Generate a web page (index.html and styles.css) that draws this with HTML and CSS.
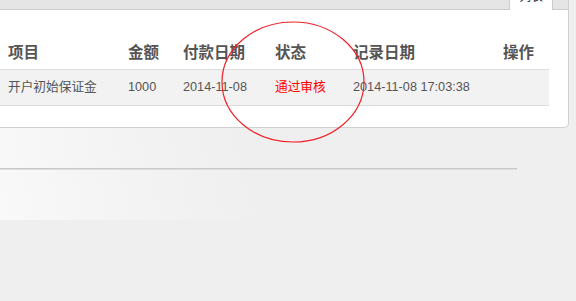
FILE: index.html
```html
<!DOCTYPE html>
<html>
<head lang="zh-CN">
    <meta charset="UTF-8">
    <title>保证金记录</title>
    <link rel="stylesheet" href="styles.css">
</head>
<body>
<div class="panel">
    <div class="tabs">
        <span class="tab">列表</span>
    </div>
    <div class="grid">
        <div class="row head">
            <div>项目</div>
            <div>金额</div>
            <div>付款日期</div>
            <div>状态</div>
            <div>记录日期</div>
            <div>操作</div>
        </div>
        <div class="row item">
            <div>开户初始保证金</div>
            <div>1000</div>
            <div>2014-11-08</div>
            <div class="ok">通过审核</div>
            <div>2014-11-08 17:03:38</div>
            <div></div>
        </div>
    </div>
</div>
<div class="foot">
    <div class="rule"></div>
</div>
<!-- 圈出审核状态 -->
<svg class="mark" width="576" height="301" viewBox="0 0 576 301">
    <ellipse cx="293" cy="82" rx="71" ry="60" fill="none" stroke="#f0202a" stroke-width="1.2"/>
</svg>
</body>
</html>
```
FILE: styles.css
```css
html, body{
    margin: 0;
    background: #efefef;
}
body{
    font-family: "Liberation Sans", "Noto Sans CJK SC", sans-serif;
    position: relative;
    overflow: hidden;
    height: 301px;
}
.panel{
    width: 568px;
    background: #fff;
    border-right: 1px solid #d0d0d0;
    border-bottom: 1px solid #d0d0d0;
    border-bottom-right-radius: 5px;
    margin-top: -21px;
    position: relative;
    z-index: 1;
}
.tabs{
    height: 30px;
    background: #e5e5e5;
    border-bottom: 1px solid #ccc;
    display: flex;
    justify-content: flex-end;
    padding-right: 15px;
}
.tab{
    width: 44px;
    height: 31px;
    box-sizing: border-box;
    background: #fff;
    border-left: 1px solid #ccc;
    border-right: 1px solid #ccc;
    font-size: 12px;
    line-height: 14px;
    padding-top: 11px;
    text-align: center;
    color: #333;
}
.grid{
    width: 549px;
    padding-bottom: 21px;
}
.row{
    display: grid;
    grid-template-columns: 120px 55px 92px 78px 150px 54px;
}
.row div{
    padding-left: 8px;
    white-space: nowrap;
}
.head{
    padding: 33px 0 6px;
    font-size: 15.5px;
    line-height: 20px;
    font-weight: bold;
    color: #555;
}
.item{
    background: #f2f2f2;
    border-top: 1px solid #ddd;
    border-bottom: 1px solid #ddd;
    font-size: 12.7px;
    line-height: 35px;
    color: #555;
}
.ok{
    color: #f00;
}
.foot{
    height: 93px;
    margin-top: -1px;
    background: linear-gradient(75deg, #f9f9f9 0, #f3f3f3 140px, #efefef 260px);
}
.rule{
    width: 517px;
    position: relative;
    top: 41px;
    border-top: 1px solid #c8c8c8;
    box-shadow: 0 1px 0 #dedede;
}
.mark{
    position: absolute;
    left: 0;
    top: 0;
    z-index: 2;
}
```
